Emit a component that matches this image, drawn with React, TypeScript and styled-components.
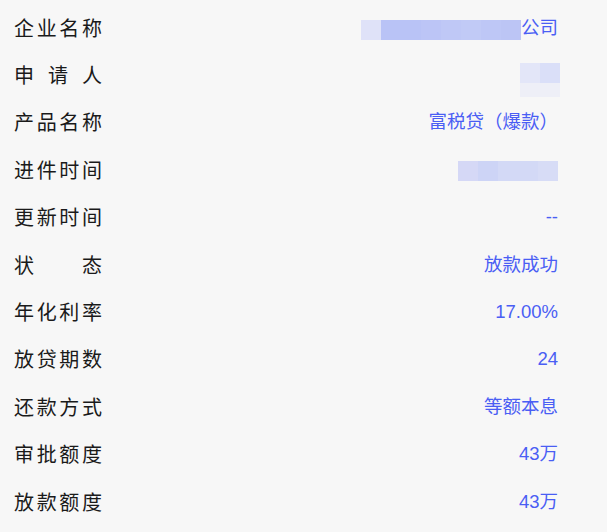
import React from 'react'
import styled, { createGlobalStyle } from 'styled-components'

const GlobalStyle = createGlobalStyle`
  html, body {
    margin: 0;
    padding: 0;
    background: #f7f7f7;
  }
`

const Panel = styled.div`
  width: 607px;
  height: 532px;
  box-sizing: border-box;
  padding: 4px 49px 0 14px;
  background: #f7f7f7;
  display: flex;
  flex-direction: column;
`

const Row = styled.div`
  height: 47.4px;
  flex: none;
  display: flex;
  align-items: center;
  justify-content: space-between;
`

const Label = styled.div`
  width: 88px;
  font-family: 'Noto Sans CJK SC', 'Noto Sans', sans-serif;
  font-size: 20px;
  line-height: 24px;
  color: #1a1a1a;
  text-align: justify;
  text-align-last: justify;
`

const Value = styled.div`
  display: flex;
  align-items: center;
  font-family: 'Liberation Sans', 'Noto Sans CJK SC', sans-serif;
  font-size: 18.5px;
  line-height: 22px;
  color: #4a5ef4;
  text-align: right;
`

const Mosaic = styled.div<{ $offset?: number }>`
  display: flex;
  flex-wrap: wrap;
  margin-top: ${(p) => p.$offset ?? 0}px;
`

const MosaicStack = styled.div<{ $offset?: number }>`
  display: flex;
  flex-direction: column;
  margin-top: ${(p) => p.$offset ?? 0}px;
  margin-right: -2px;
`

const Cell = styled.span<{ $c: string; $h?: number; $w?: number }>`
  display: block;
  width: ${(p) => p.$w ?? 20}px;
  height: ${(p) => p.$h ?? 20}px;
  background: ${(p) => p.$c};
`

type Item = { label: string; value: React.ReactNode }

const companyCells = ['#dfe2f8', '#b9c3f6', '#b9c3f6', '#bcc5f6', '#bfc8f6', '#c1caf6', '#bec7f6', '#bcc5f5']
const timeCells = ['#d5d8f6', '#cdd4f6', '#d3d9f6', '#d3d9f6', '#d7dcf6']

const items: Item[] = [
  {
    label: '企业名称',
    value: (
      <>
        <Mosaic $offset={4}>
          {companyCells.map((c, i) => (
            <Cell key={i} $c={c} />
          ))}
        </Mosaic>
        <span>公司</span>
      </>
    ),
  },
  {
    label: '申请人',
    value: (
      <MosaicStack $offset={10}>
        <Mosaic>
          <Cell $c="#e3e6f8" />
          <Cell $c="#dadff8" />
        </Mosaic>
        <Cell $c="#eeeff7" $w={40} $h={14} />
      </MosaicStack>
    ),
  },
  { label: '产品名称', value: '富税贷（爆款）' },
  {
    label: '进件时间',
    value: (
      <Mosaic $offset={2}>
        {timeCells.map((c, i) => (
          <Cell key={i} $c={c} />
        ))}
      </Mosaic>
    ),
  },
  { label: '更新时间', value: '--' },
  { label: '状态', value: '放款成功' },
  { label: '年化利率', value: '17.00%' },
  { label: '放贷期数', value: '24' },
  { label: '还款方式', value: '等额本息' },
  { label: '审批额度', value: '43万' },
  { label: '放款额度', value: '43万' },
]

export default function App() {
  return (
    <>
      <GlobalStyle />
      <Panel>
        {items.map((it) => (
          <Row key={it.label}>
            <Label>{it.label}</Label>
            <Value>{it.value}</Value>
          </Row>
        ))}
      </Panel>
    </>
  )
}
